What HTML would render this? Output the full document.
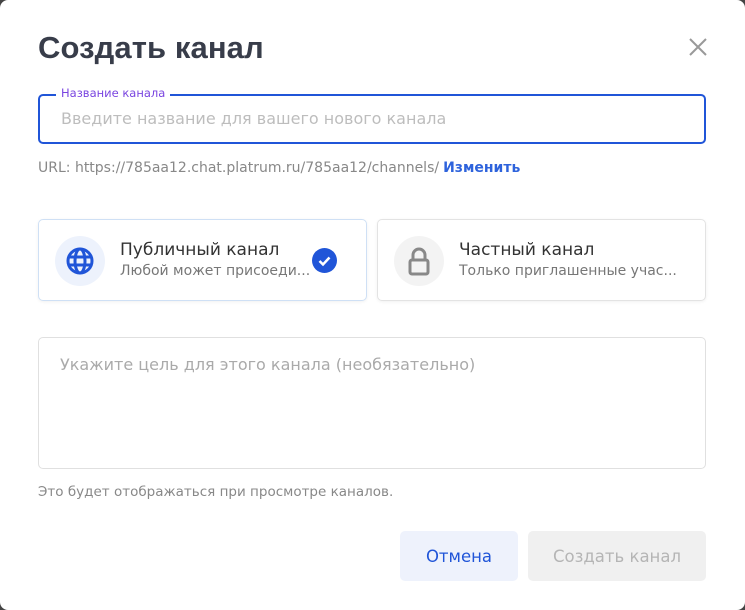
<!DOCTYPE html>
<html><head><meta charset="utf-8"><style>
*{box-sizing:border-box;margin:0;padding:0}
html,body{width:745px;height:610px;background:#444;overflow:hidden}
body{font-family:"DejaVu Sans",sans-serif}
.m{position:absolute;left:0;top:0;width:745px;height:610px;background:#fff;border-radius:8px}
.a{position:absolute;white-space:nowrap}
h1{position:absolute;left:38px;top:30px;font-family:"Liberation Sans",sans-serif;font-size:31px;font-weight:bold;color:#383d4a;letter-spacing:0.1px}
.inp{left:38px;top:94px;width:668px;height:50px;border:2px solid #2055d8;border-radius:5px}
.lab{left:56px;top:86px;background:#fff;padding:0 5px;font-size:11.5px;color:#7a45e0}
.ph{left:61px;top:109px;font-size:16px;color:#bdbdbd}
.url{left:38px;top:160px;font-size:14px;color:#888}
.url b{color:#2e63dc;font-weight:bold;margin-left:4px}
.card{top:219px;height:82px;width:329px;border:1px solid #e3e3e3;border-radius:5px;box-shadow:0 1px 3px rgba(0,0,0,.06)}
.ic{position:absolute;left:16px;top:16px;width:50px;height:50px;border-radius:50%}
.t1{position:absolute;left:81px;top:20px;font-size:17px;color:#333}
.t2{position:absolute;left:81px;top:43px;font-size:14px;color:#777}
.ta{left:38px;top:337px;width:668px;height:132px;border:1px solid #e0e0e0;border-radius:5px}
.tap{left:60px;top:355px;font-size:16px;color:#aaa}
.hint{left:38px;top:484px;font-size:13.5px;color:#888}
.btn{top:531px;height:50px;border-radius:5px;font-size:16.5px;display:flex;align-items:center;justify-content:center}
</style></head><body>
<div class="m">
<h1>Создать канал</h1>
<svg class="a" style="left:688px;top:37px" width="20" height="20" viewBox="0 0 20 20"><path d="M2 2L18 18M18 2L2 18" stroke="#999" stroke-width="2"/></svg>
<div class="a inp"></div>
<div class="a lab">Название канала</div>
<div class="a ph">Введите название для вашего нового канала</div>
<div class="a url">URL: https://785aa12.chat.platrum.ru/785aa12/channels/<b>Изменить</b></div>
<div class="a card" style="left:38px;border-color:#cfe0f5">
 <div class="ic" style="background:#edf2fc"><svg width="50" height="50" viewBox="0 0 50 50"><g fill="none" stroke="#2055d8" stroke-width="3"><circle cx="25" cy="25" r="12"/><ellipse cx="25" cy="25" rx="5" ry="12"/><path d="M13 21H37M13 29H37"/></g></svg></div>
 <div class="t1">Публичный канал</div>
 <div class="t2">Любой может присоеди...</div>
 <svg style="position:absolute;left:273px;top:28px" width="25" height="25" viewBox="0 0 25 25"><circle cx="12.5" cy="12.5" r="12.5" fill="#2055d8"/><path d="M7.5 13L11 16.5L17.5 9.5" fill="none" stroke="#fff" stroke-width="2.5"/></svg>
</div>
<div class="a card" style="left:377px">
 <div class="ic" style="background:#f3f3f3"><svg width="50" height="50" viewBox="0 0 50 50"><g fill="none" stroke="#888" stroke-width="3"><path d="M19 24V19a6 6 0 0 1 12 0v5"/><rect x="16" y="24" width="18" height="14" rx="2"/></g></svg></div>
 <div class="t1">Частный канал</div>
 <div class="t2">Только приглашенные учас...</div>
</div>
<div class="a ta"></div>
<div class="a tap">Укажите цель для этого канала (необязательно)</div>
<div class="a hint">Это будет отображаться при просмотре каналов.</div>
<div class="a btn" style="left:400px;width:118px;background:#eef2fc;color:#2055d8">Отмена</div>
<div class="a btn" style="left:528px;width:178px;background:#f0f0f0;color:#b5b5b5">Создать канал</div>
</div>
</body></html>
